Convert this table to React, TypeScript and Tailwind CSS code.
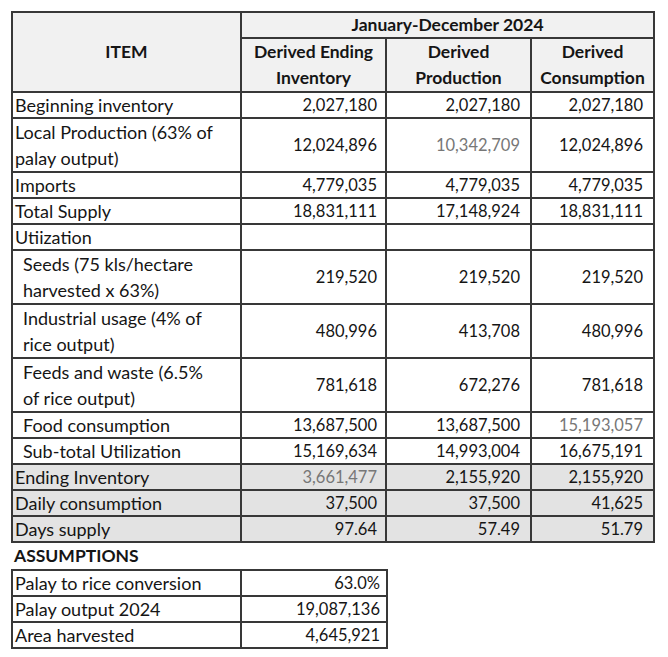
import React from 'react'

type Row = {
  label: string
  label2?: string
  values: string[]
  indent?: boolean
  shade?: boolean
  muted?: number[]
}

const rows: Row[] = [
  { label: 'Beginning inventory', values: ['2,027,180', '2,027,180', '2,027,180'] },
  { label: 'Local Production (63% of', label2: 'palay output)', values: ['12,024,896', '10,342,709', '12,024,896'], muted: [1] },
  { label: 'Imports', values: ['4,779,035', '4,779,035', '4,779,035'] },
  { label: 'Total Supply', values: ['18,831,111', '17,148,924', '18,831,111'] },
  { label: 'Utiization', values: ['', '', ''] },
  { label: 'Seeds (75 kls/hectare', label2: 'harvested x 63%)', values: ['219,520', '219,520', '219,520'], indent: true },
  { label: 'Industrial usage (4% of', label2: 'rice output)', values: ['480,996', '413,708', '480,996'], indent: true },
  { label: 'Feeds and waste (6.5%', label2: 'of rice output)', values: ['781,618', '672,276', '781,618'], indent: true },
  { label: 'Food consumption', values: ['13,687,500', '13,687,500', '15,193,057'], indent: true, muted: [2] },
  { label: 'Sub-total Utilization', values: ['15,169,634', '14,993,004', '16,675,191'], indent: true },
  { label: 'Ending Inventory', values: ['3,661,477', '2,155,920', '2,155,920'], shade: true, muted: [0] },
  { label: 'Daily consumption', values: ['37,500', '37,500', '41,625'], shade: true },
  { label: 'Days supply', values: ['97.64', '57.49', '51.79'], shade: true },
]

const assumptions = [
  { label: 'Palay to rice conversion', value: '63.0%' },
  { label: 'Palay output 2024', value: '19,087,136' },
  { label: 'Area harvested', value: '4,645,921' },
]

const cell = 'border-2 border-[#383838] p-0'

export default function App() {
  return (
    <div
      className="min-h-screen bg-white pl-[11px] pt-[11px] text-[18px] leading-[24px] text-[#151515]"
      style={{ fontFamily: 'Lato, "Open Sans", sans-serif' }}
    >
      <table className="table-fixed border-collapse w-[642px]">
        <colgroup>
          <col className="w-[229px]" />
          <col className="w-[145px]" />
          <col className="w-[145px]" />
          <col className="w-[123px]" />
        </colgroup>
        <thead>
          <tr className="h-[26px] bg-[#f1f1f1]">
            <th rowSpan={2} className={`${cell} font-bold text-[17.5px] text-center`}>ITEM</th>
            <th colSpan={3} className={`${cell} font-bold text-[17.5px] text-center`}>January-December 2024</th>
          </tr>
          <tr className="h-[53px] bg-[#f1f1f1]">
            <th className={`${cell} font-bold text-[17.5px] leading-[26px] text-center`}>Derived Ending<br />Inventory</th>
            <th className={`${cell} font-bold text-[17.5px] leading-[26px] text-center`}>Derived<br />Production</th>
            <th className={`${cell} font-bold text-[17.5px] leading-[26px] text-center`}>Derived<br />Consumption</th>
          </tr>
        </thead>
        <tbody>
          {rows.map((r) => (
            <tr key={r.label} className={`${r.label2 ? 'h-[53px]' : 'h-[26px]'} ${r.shade ? 'bg-[#e3e3e3]' : ''}`}>
              <td className={`${cell} ${r.indent ? 'pl-[10px]' : 'pl-[2px]'} ${r.label2 ? 'leading-[26px]' : ''} text-left`}>
                {r.label}
                {r.label2 && (
                  <>
                    <br />
                    {r.label2}
                  </>
                )}
              </td>
              {r.values.map((v, i) => (
                <td
                  key={i}
                  className={`${cell} text-right text-[16.5px] ${i === 0 ? 'pr-[8px]' : 'pr-[10px]'} ${r.muted?.includes(i) ? 'text-[#777777]' : ''}`}
                >
                  {v}
                </td>
              ))}
            </tr>
          ))}
        </tbody>
      </table>

      <div className="h-[26px] pl-[3px] pt-[1px] font-bold text-[17.5px]">ASSUMPTIONS</div>

      <table className="table-fixed border-collapse w-[375px]">
        <colgroup>
          <col className="w-[229px]" />
          <col className="w-[146px]" />
        </colgroup>
        <tbody>
          {assumptions.map((a) => (
            <tr key={a.label} className="h-[26px]">
              <td className={`${cell} pl-[2px] text-left`}>{a.label}</td>
              <td className={`${cell} pr-[6px] text-right text-[16.5px]`}>{a.value}</td>
            </tr>
          ))}
        </tbody>
      </table>
    </div>
  )
}
